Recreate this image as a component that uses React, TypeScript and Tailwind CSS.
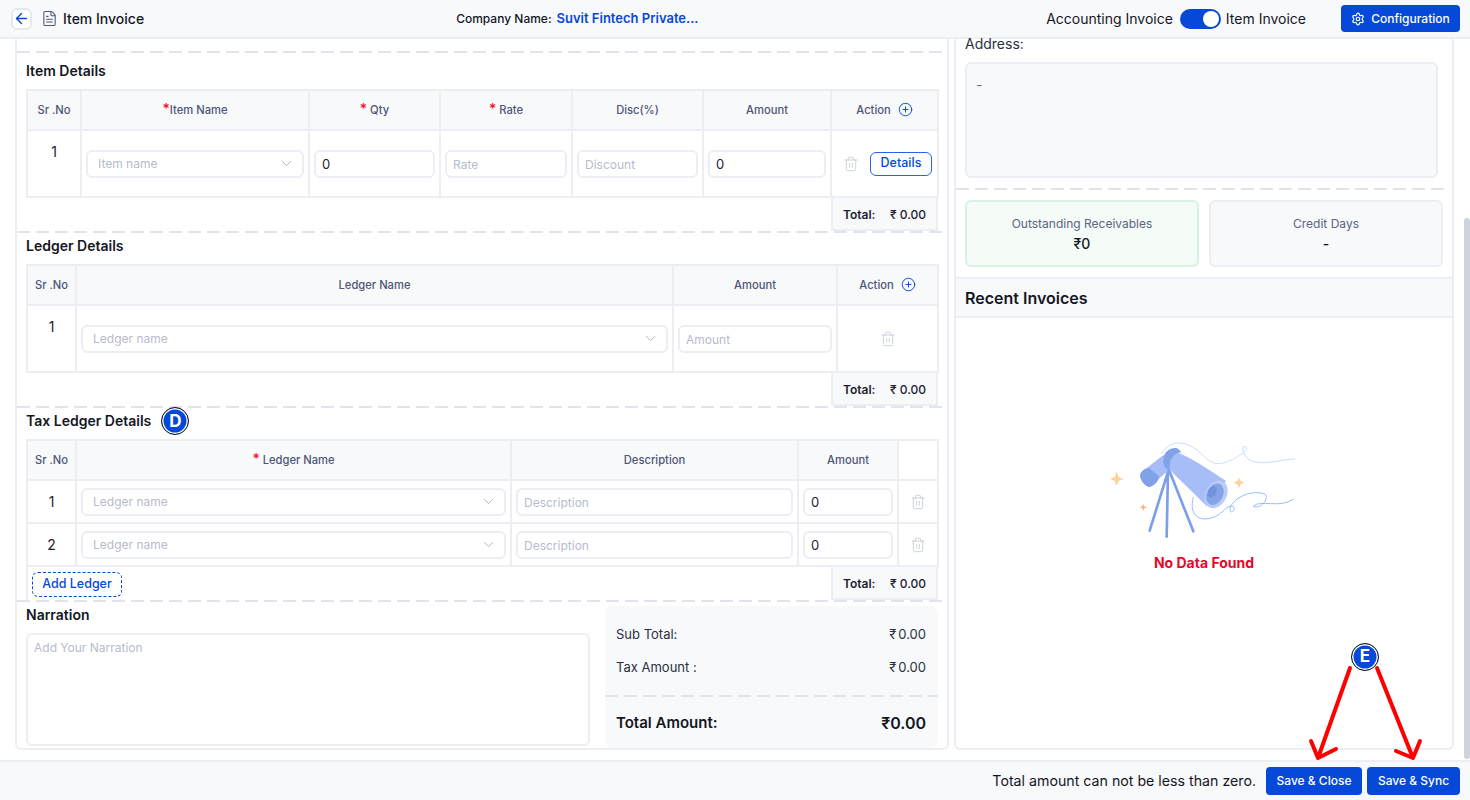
import type { ReactNode } from 'react'
import { ArrowLeft, ChevronDown, CirclePlus, FileText, Settings, Trash2 } from 'lucide-react'

const Dashed = ({ className = '' }: { className?: string }) => (
  <div className={`h-[2px] bg-[repeating-linear-gradient(90deg,#e1e4ec_0,#e1e4ec_13px,transparent_13px,transparent_19px)] ${className}`} />
)

const Star = () => <span className="text-[14px] leading-[10px] text-[#ec0f2e]">*</span>

const Th = ({ children, blank }: { children?: ReactNode; blank?: boolean }) => (
  <th className={`border-2 border-[#eceef3] text-center text-[11.2px] font-medium text-[#4d5675] ${blank ? 'bg-white' : 'bg-[#f8f9fb]'}`}>
    {children}
  </th>
)

const Td = ({ children }: { children?: ReactNode }) => (
  <td className="border-2 border-[#eceef3] px-[4px] align-middle">{children}</td>
)

const SrNo = ({ n, raised }: { n: number; raised?: boolean }) => (
  <td className={`border-2 border-[#eceef3] text-center text-[14px] text-[#1d2230] ${raised ? 'align-top pt-[10px]' : 'align-middle'}`}>{n}</td>
)

const Field = ({ placeholder, value }: { placeholder?: string; value?: string }) => (
  <input
    readOnly
    placeholder={placeholder}
    value={value ?? ''}
    className="h-[28px] w-full rounded-md border-2 border-[#eceef3] bg-white px-[6px] text-[13px] text-[#1d2230] outline-none placeholder:text-[12px] placeholder:text-[#b6bccd]"
  />
)

const Select = ({ placeholder }: { placeholder: string }) => (
  <div className="flex h-[28px] w-full items-center justify-between rounded-md border-2 border-[#eceef3] bg-white pl-[10px] pr-[7px] text-[12px] text-[#b6bccd]">
    {placeholder}
    <ChevronDown size={17} strokeWidth={1} className="text-[#8f96a8]" />
  </div>
)

const Bin = () => <Trash2 size={16} strokeWidth={1.25} className="text-[#c3c8d6]" />

const TotalBox = () => (
  <div className="flex h-[33px] w-[107px] items-center justify-between border-2 border-t-0 border-[#eceef3] bg-[#f8f9fb] px-[10px] pt-[2px] text-[12px] text-[#1d2230]">
    <span className="font-semibold">Total:</span>
    <span className="font-medium">₹ 0.00</span>
  </div>
)

const Title = ({ children, first }: { children: ReactNode; first?: boolean }) => (
  <div className={`mb-[8px] flex h-[20px] items-center gap-[10px] text-[14px] font-semibold leading-[20px] text-[#14171f] ${first ? 'mt-[8px]' : 'mt-[3px]'}`}>
    {children}
  </div>
)

const Badge = ({ letter }: { letter: string }) => (
  <span className="flex h-[28px] w-[28px] shrink-0 items-center justify-center rounded-full border-[1.5px] border-[#1a1a1a] bg-[#0648d8] text-[17px] font-bold text-white shadow-[inset_0_0_0_1.5px_#ffffff]">
    {letter}
  </span>
)

const ItemDetails = () => (
  <div className="w-[921px] pl-[9px]">
    <Title first>Item Details</Title>
    <table className="w-[911px] table-fixed">
      <colgroup>
        <col className="w-[54px]" />
        <col className="w-[228px]" />
        <col className="w-[131px]" />
        <col className="w-[132px]" />
        <col className="w-[131px]" />
        <col className="w-[128px]" />
        <col className="w-[107px]" />
      </colgroup>
      <thead>
        <tr className="h-[40px]">
          <Th>Sr .No</Th>
          <Th><Star />Item Name</Th>
          <Th><Star /> Qty</Th>
          <Th><Star /> Rate</Th>
          <Th>Disc(%)</Th>
          <Th>Amount</Th>
          <Th>
            <span className="inline-flex items-center gap-[7px]">
              Action <CirclePlus size={15} strokeWidth={1.5} className="text-[#0648d8]" />
            </span>
          </Th>
        </tr>
      </thead>
      <tbody>
        <tr className="h-[67px]">
          <SrNo n={1} raised />
          <Td><Select placeholder="Item name" /></Td>
          <Td><Field value="0" /></Td>
          <Td><Field placeholder="Rate" /></Td>
          <Td><Field placeholder="Discount" /></Td>
          <Td><Field value="0" /></Td>
          <Td>
            <div className="mr-[1px] flex items-center justify-end gap-[11px]">
              <Bin />
              <button className="h-[24px] w-[62px] rounded-md border-[1.5px] border-[#2a62e4] text-[12.5px] font-medium text-[#0648d8]">Details</button>
            </div>
          </Td>
        </tr>
      </tbody>
    </table>
    <div className="flex justify-end"><TotalBox /></div>
  </div>
)

const LedgerDetails = () => (
  <div className="w-[921px] pl-[9px]">
    <Title>Ledger Details</Title>
    <table className="w-[911px] table-fixed">
      <colgroup>
        <col className="w-[49px]" />
        <col className="w-[597px]" />
        <col className="w-[164px]" />
        <col className="w-[101px]" />
      </colgroup>
      <thead>
        <tr className="h-[40px]">
          <Th>Sr .No</Th>
          <Th>Ledger Name</Th>
          <Th>Amount</Th>
          <Th>
            <span className="inline-flex items-center gap-[7px]">
              Action <CirclePlus size={15} strokeWidth={1.5} className="text-[#0648d8]" />
            </span>
          </Th>
        </tr>
      </thead>
      <tbody>
        <tr className="h-[67px]">
          <SrNo n={1} raised />
          <Td><Select placeholder="Ledger name" /></Td>
          <Td><Field placeholder="Amount" /></Td>
          <Td><div className="flex justify-center"><Bin /></div></Td>
        </tr>
      </tbody>
    </table>
    <div className="flex justify-end"><TotalBox /></div>
  </div>
)

const TaxLedgerDetails = () => (
  <div className="w-[921px] pl-[9px]">
    <Title>
      Tax Ledger Details
      <span className="-my-[4px]"><Badge letter="D" /></span>
    </Title>
    <table className="w-[911px] table-fixed">
      <colgroup>
        <col className="w-[49px]" />
        <col className="w-[435px]" />
        <col className="w-[287px]" />
        <col className="w-[100px]" />
        <col className="w-[40px]" />
      </colgroup>
      <thead>
        <tr className="h-[40px]">
          <Th>Sr .No</Th>
          <Th><Star /> Ledger Name</Th>
          <Th>Description</Th>
          <Th>Amount</Th>
          <Th blank />
        </tr>
      </thead>
      <tbody>
        {[1, 2].map((n) => (
          <tr key={n} className="h-[43px]">
            <SrNo n={n} />
            <Td><Select placeholder="Ledger name" /></Td>
            <Td><Field placeholder="Description" /></Td>
            <Td><Field value="0" /></Td>
            <Td><div className="flex justify-center"><Bin /></div></Td>
          </tr>
        ))}
      </tbody>
    </table>
    <div className="flex w-[912px] items-start justify-between border-l-2 border-[#eceef3]">
      <button className="ml-[4px] mt-[5px] h-[25px] w-[90px] rounded-md border-[1.5px] border-dashed border-[#0648d8] text-[12.5px] font-medium text-[#0648d8]">
        Add Ledger
      </button>
      <TotalBox />
    </div>
  </div>
)

const SummaryRow = ({ label }: { label: string }) => (
  <div className="flex h-[20px] items-center justify-between pl-[11px] pr-[12px] text-[13px] text-[#2b3040]">
    <span>{label}</span>
    <span>₹<span className="ml-[2px]">0.00</span></span>
  </div>
)

const NarrationRow = () => (
  <div className="flex items-start pb-[2px] pl-[9px]">
    <div className="w-[564px]">
      <Title>Narration</Title>
      <textarea
        readOnly
        placeholder="Add Your Narration"
        className="mt-[1px] block h-[113px] w-full resize-none rounded-md border-2 border-[#eceef3] px-[6px] py-[4px] text-[12px] outline-none placeholder:text-[#b6bccd]"
      />
    </div>
    <div className="ml-[15px] mt-[4px] h-[142px] w-[333px] rounded-lg bg-[#f8f9fb] pt-[19px]">
      <SummaryRow label="Sub Total:" />
      <div className="mt-[13px]"><SummaryRow label="Tax Amount :" /></div>
      <Dashed className="mt-[17px]" />
      <div className="mt-[14px] flex h-[24px] items-center justify-between pl-[11px] pr-[12px] font-semibold text-[#14171f]">
        <span className="text-[15px]">Total Amount:</span>
        <span className="text-[16px]">₹0.00</span>
      </div>
    </div>
  </div>
)

const Telescope = () => (
  <svg viewBox="12 0 720 390" className="h-[130px] w-[240px]" fill="none">
    <path d="M245 105 C270 60 320 60 370 110 C400 140 420 140 460 120 C490 105 510 85 495 82 C480 80 490 120 520 128 C560 138 610 120 645 120" stroke="#cfdcfb" strokeWidth="3" />
    <path d="M340 235 C325 290 360 310 400 295 C430 285 440 255 460 262 C470 270 450 290 450 270 C455 240 510 210 555 225 C570 240 540 272 520 262 C540 240 600 270 640 240" stroke="#9dbcf5" strokeWidth="3" />
    <path d="M265 155 L209 335 M264 155 L260 353 M268 155 L340 337" stroke="#7d9fe8" strokeWidth="8" strokeLinecap="round" />
    <path d="M250 108 L190 155 L222 192 L270 150 Z" fill="#a6bdf7" />
    <path d="M180 172 C178 160 195 145 208 148 L237 172 C238 185 220 205 205 204 C195 200 184 190 180 172 Z" fill="#7fa2e8" />
    <path d="M262 100 C290 90 340 120 438 186 L380 262 C340 220 290 175 268 150 Z" fill="#a6bdf7" />
    <path d="M250 120 C252 98 272 84 292 88 L305 100 C280 100 265 125 270 156 C256 150 248 136 250 120 Z" fill="#7fa2e8" />
    <ellipse cx="408" cy="226" rx="32" ry="44" transform="rotate(28 408 226)" fill="#b9cbf9" />
    <ellipse cx="405" cy="226" rx="24" ry="34" transform="rotate(28 405 226)" fill="#85a4e8" />
    <ellipse cx="396" cy="219" rx="12" ry="18" transform="rotate(28 396 219)" fill="#7193df" />
    <path d="M110 158 L116 174 L130 180 L116 186 L110 200 L104 186 L90 180 L104 174 Z" fill="#fdd29a" />
    <path d="M477 176 L482 186 L493 191 L482 196 L477 207 L472 196 L461 191 L472 186 Z" fill="#fdd29a" />
    <path d="M190 255 L193 262 L201 265 L193 268 L190 276 L187 268 L179 265 L187 262 Z" fill="#f9b27f" />
  </svg>
)

const RightPanel = () => (
  <div className="ml-[5px] flex w-[500px] flex-col rounded-b-md border-x-2 border-b-2 border-[#eceef3]">
    <div className="ml-[9px] h-[10px] text-[14px] leading-[10px] text-[#2b3040]">Address:</div>
    <div className="ml-[9px] mt-[13px] h-[116px] w-[473px] rounded-md border-2 border-[#eceef3] bg-[#f8f9fb] px-[9px] py-[10px] text-[14px] text-[#6b7288]">-</div>
    <Dashed className="mr-[3px] mt-[10px]" />
    <div className="ml-[9px] mt-[10px] flex gap-[10px]">
      <div className="flex h-[67px] w-[234px] flex-col items-center justify-center rounded-md border-2 border-[#d6f2e2] bg-[#f5fbf7] leading-[20px]">
        <span className="text-[12px] text-[#5b6480]">Outstanding Receivables</span>
        <span className="text-[14px] font-medium text-[#14171f]">₹0</span>
      </div>
      <div className="flex h-[67px] w-[234px] flex-col items-center justify-center rounded-md border-2 border-[#eceef3] bg-[#f8f9fb] leading-[20px]">
        <span className="text-[12px] text-[#5b6480]">Credit Days</span>
        <span className="text-[14px] font-medium text-[#14171f]">-</span>
      </div>
    </div>
    <div className="mt-[10px] flex h-[41px] items-center border-y-2 border-[#eceef3] bg-[#f8f9fb] pl-[9px] text-[16px] font-semibold text-[#14171f]">
      Recent Invoices
    </div>
    <div className="flex flex-1 flex-col items-center pt-[101px]">
      <Telescope />
      <div className="mt-[4px] text-[14px] font-bold leading-[20px] text-[#e4092a]">No Data Found</div>
    </div>
  </div>
)

export default function App() {
  return (
    <div className="relative flex h-[800px] w-[1470px] flex-col overflow-hidden bg-white font-['Inter',sans-serif]">
      <header className="flex h-[39px] shrink-0 items-center border-b-2 border-[#eceef3] bg-[#f8f9fb]">
        <button className="ml-[11px] flex h-[22px] w-[21px] items-center justify-center rounded-md border-2 border-[#e6e8ee] bg-white text-[#0648d8]">
          <ArrowLeft size={17} strokeWidth={2} />
        </button>
        <FileText size={17} strokeWidth={1.5} className="ml-[9px] text-[#4d5675]" />
        <span className="ml-[5px] text-[14px] font-medium text-[#14171f]">Item Invoice</span>
        <span className="ml-[312px] text-[12px] font-medium text-[#14171f]">Company Name:</span>
        <span className="ml-[5px] text-[13px] font-semibold text-[#0648d8]">Suvit Fintech Private...</span>
        <div className="ml-auto flex items-center text-[14px] text-[#14171f]">
          <span>Accounting Invoice</span>
          <span className="ml-[7px] flex h-[20px] w-[41px] items-center justify-end rounded-full bg-[#0648d8] pr-[2px]">
            <span className="h-[16px] w-[16px] rounded-full bg-white" />
          </span>
          <span className="ml-[5px]">Item Invoice</span>
        </div>
        <button className="ml-[35px] mr-[10px] flex h-[27px] w-[119px] items-center justify-center gap-[6px] rounded-[4px] bg-[#0648d8] text-[12px] font-medium leading-[27px] text-white">
          <Settings size={14} strokeWidth={2} />
          Configuration
        </button>
      </header>

      <main className="flex min-h-0 flex-1 pb-[10px] pl-[15px]">
        <div className="w-[934px] rounded-b-md border-x-2 border-b-2 border-[#eceef3] pt-[12px]">
          <Dashed />
          <ItemDetails />
          <Dashed />
          <LedgerDetails />
          <Dashed />
          <TaxLedgerDetails />
          <Dashed />
          <NarrationRow />
        </div>
        <RightPanel />
        <div className="ml-[10px] mt-[179px] -mb-[9px] w-[6px] rounded-full bg-[#cdd3dd]" />
      </main>

      <footer className="flex h-[40px] shrink-0 items-center justify-end border-t-2 border-[#eceef3] bg-[#f8f9fb] pr-[10px]">
        <span className="mr-[10px] text-[14.2px] text-[#14171f]">Total amount can not be less than zero.</span>
        <button className="h-[28px] w-[96px] rounded-[4px] bg-[#0648d8] text-[12px] font-medium text-white">Save &amp; Close</button>
        <button className="ml-[5px] h-[28px] w-[93px] rounded-[4px] bg-[#0648d8] text-[12px] font-medium text-white">Save &amp; Sync</button>
      </footer>

      {/* annotation drawn over the page */}
      <div className="absolute left-[1351px] top-[643px]"><Badge letter="E" /></div>
      <svg className="absolute left-[1300px] top-[660px]" width="130" height="110" viewBox="1300 660 130 110" fill="none" stroke="#ff0000" strokeWidth="4" strokeLinecap="round" strokeLinejoin="round">
        <path d="M1350 668 L1318 758 M1311 741 L1318 758 L1336 749" />
        <path d="M1377 668 L1413 758 M1396 751 L1413 758 L1420 741" />
      </svg>
    </div>
  )
}
